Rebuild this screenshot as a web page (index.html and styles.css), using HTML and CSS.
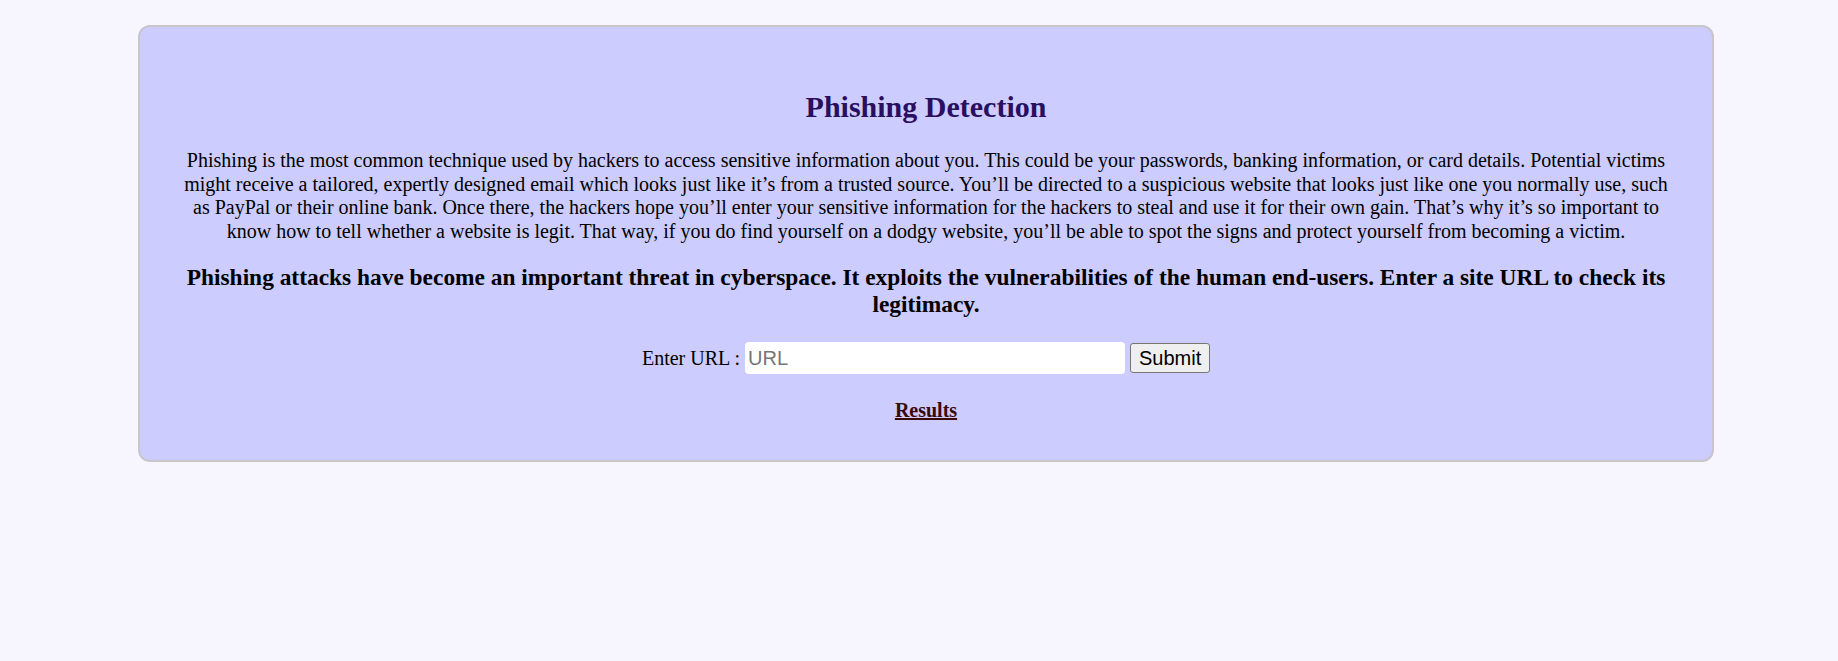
FILE: index.html
```html
<!DOCTYPE html>
<html lang="en">
<head>
<meta charset="utf-8">
<title>Phishing Detection</title>
<link rel="stylesheet" href="styles.css">
</head>
<body>
<div class="card">
  <h2 class="title">Phishing Detection</h2>
  <p class="intro">Phishing is the most common technique used by hackers to access sensitive information about you. This could be your passwords, banking information, or card details. Potential victims might receive a tailored, expertly designed email which looks just like it’s from a trusted source. You’ll be directed to a suspicious website that looks just like one you normally use, such as PayPal or their online bank. Once there, the hackers hope you’ll enter your sensitive information for the hackers to steal and use it for their own gain. That’s why it’s so important to know how to tell whether a website is legit. That way, if you do find yourself on a dodgy website, you’ll be able to spot the signs and protect yourself from becoming a victim.</p>
  <h3 class="lead">Phishing attacks have become an important threat in cyberspace. It exploits the vulnerabilities of the human end-users. Enter a site URL to check its legitimacy.</h3>
  <form class="url-form">
    <label class="url-label" for="url">Enter URL :</label>
    <input class="url-input" id="url" type="text" placeholder="URL">
    <button class="submit-btn" type="button">Submit</button>
  </form>
  <h4 class="results">Results</h4>
</div>
</body>
</html>
```

FILE: styles.css
```css
html, body {
  margin: 0;
  padding: 0;
}
body {
  background: #f7f5fe;
  font-family: "Liberation Serif", "Times New Roman", serif;
  font-size: 20px;
  color: #000;
}
.card {
  margin: 25px 124px 0 138px;
  background: #ccccff;
  border: 2px solid #c9c5cb;
  border-radius: 12px;
  text-align: center;
  padding: 63px 40px 38px;
}
.title {
  margin: 0 0 25px;
  font-size: 30px;
  line-height: 34px;
  font-weight: bold;
  color: #2a0f5f;
}
.intro {
  margin: 0 0 21px;
  font-size: 20px;
  line-height: 23.5px;
}
.lead {
  margin: 0 0 24px;
  font-size: 23.4px;
  line-height: 27px;
  font-weight: bold;
}
.url-form {
  display: flex;
  justify-content: center;
  align-items: center;
  gap: 5px;
  height: 32px;
  margin: 0;
}
.url-label {
  font-size: 20px;
  line-height: 23px;
}
.url-input {
  width: 380px;
  height: 32px;
  box-sizing: border-box;
  border: none;
  border-radius: 4px;
  background: #fff;
  padding: 1px 3px;
  font-family: "Liberation Sans", Arial, sans-serif;
  font-size: 20px;
  outline: none;
}
.url-input::placeholder {
  color: #757575;
}
.submit-btn {
  height: 30px;
  width: 80px;
  box-sizing: border-box;
  font-family: "Liberation Sans", Arial, sans-serif;
  font-size: 20px;
  background: #efefef;
  border: 1px solid #767676;
  border-radius: 3px;
  padding: 0;
  color: #000;
}
.results {
  margin: 25px 0 0;
  font-size: 20px;
  line-height: 23px;
  font-weight: bold;
  text-decoration: underline;
  color: #3a0a0a;
}
```
